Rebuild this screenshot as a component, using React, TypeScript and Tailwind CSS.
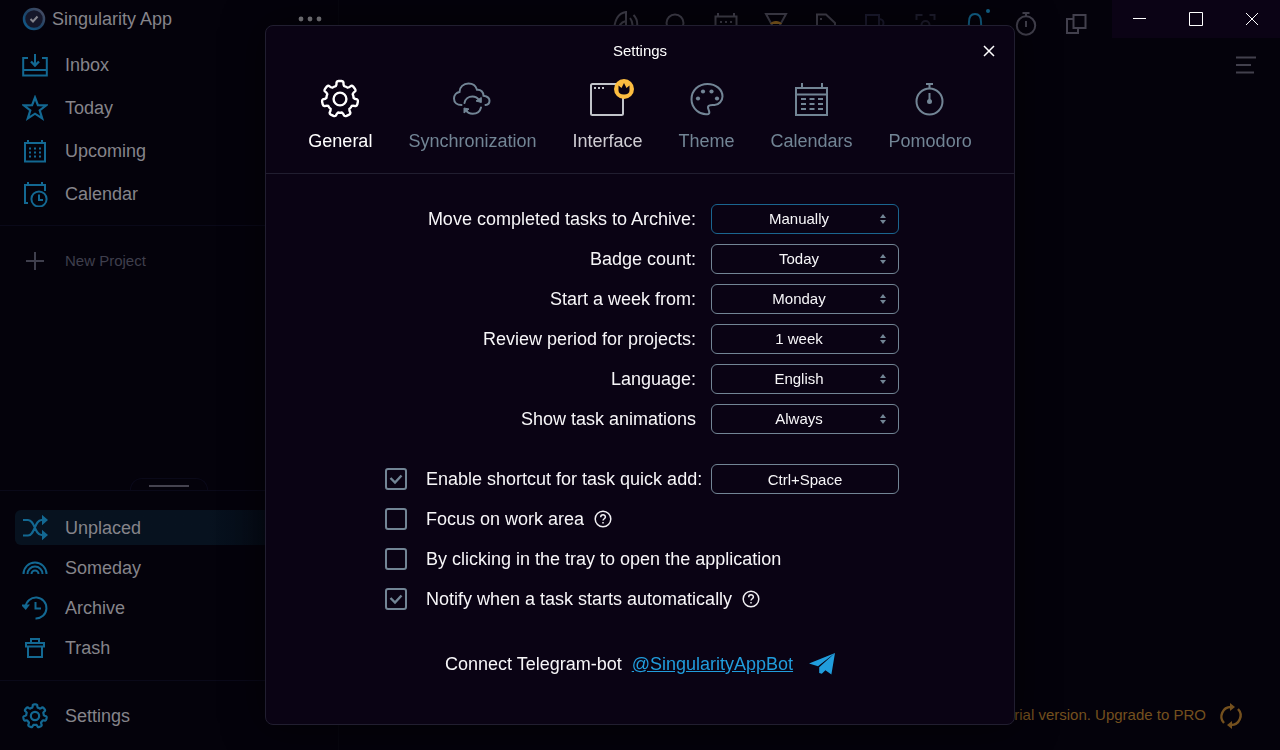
import React, { useState } from 'react';
import clsx from 'clsx';

interface IconProps {
  className?: string;
}

interface NavItem {
  label: string;
  icon: React.ReactNode;
}

// Closed outline of a seven-toothed gear around (20, 20)
function gearOutline(): string {
  const teeth = 7;
  const step = (Math.PI * 2) / teeth;
  const at = (r: number, a: number) =>
    `${(20 + r * Math.sin(a)).toFixed(2)} ${(20 - r * Math.cos(a)).toFixed(2)}`;
  let d = '';
  for (let i = 0; i < teeth; i++) {
    const a = i * step;
    d += `${i === 0 ? 'M' : 'L'}${at(13.6, a - 0.31)}`;
    d += `Q${at(14.6, a - 0.23)} ${at(17.2, a - 0.2)}`;
    d += `Q${at(18.2, a - 0.16)} ${at(18.1, a - 0.08)}`;
    d += `L${at(18.1, a + 0.08)}`;
    d += `Q${at(18.2, a + 0.16)} ${at(17.2, a + 0.2)}`;
    d += `Q${at(14.6, a + 0.23)} ${at(13.6, a + 0.31)}`;
    d += `Q${at(13.9, a + step / 2)} ${at(13.6, a + step - 0.31)}`;
  }
  return d + 'Z';
}

const GEAR = gearOutline();

function GearIcon({ className, thick }: IconProps & { thick?: boolean }) {
  return (
    <svg viewBox="0 0 40 40" className={className} fill="none" stroke="currentColor" strokeWidth={thick ? 3.4 : 2.4} strokeLinejoin="round" aria-hidden="true">
      <path d={GEAR} />
      <circle cx="20" cy="20" r="6.4" />
    </svg>
  );
}

// 26px line icon used by the sidebar and the toolbar
function Glyph({ children, className = 'size-[26px]' }: { children: React.ReactNode; className?: string }) {
  return (
    <svg viewBox="0 0 26 26" className={clsx('shrink-0', className)} fill="none" stroke="currentColor" strokeWidth="2" aria-hidden="true">
      {children}
    </svg>
  );
}

const mainNav: NavItem[] = [
  {
    label: 'Inbox',
    icon: (
      <Glyph>
        <path d="M6 6H1.2v17.5h23.6V6H20M1.2 18h23.6M13 2v10" />
        <path d="M9 9.5l4 4 4-4" strokeWidth="2.4" />
      </Glyph>
    ),
  },
  {
    label: 'Today',
    icon: (
      <Glyph>
        <path d="M13 2.5l2.9 7.6 8.3.2-6.5 5 2.5 8.1-7.2-4.7-7.2 4.7 2.5-8.1-6.5-5 8.3-.2z" strokeWidth="2.2" />
      </Glyph>
    ),
  },
  {
    label: 'Upcoming',
    icon: (
      <Glyph>
        <path d="M3 5h20v18.5H3zM6 2v3M20 2v3" />
        <path d="M7 10.5h12M7 14.5h12M7 18.5h12" strokeDasharray="2 3" />
      </Glyph>
    ),
  },
  {
    label: 'Calendar',
    icon: (
      <Glyph>
        <path d="M6 22H3V4h20v6M6 1v3M20 1v3" />
        <circle cx="17" cy="18" r="7.6" />
        <path d="M17 13.5V19h4" />
      </Glyph>
    ),
  },
];

const extraNav: NavItem[] = [
  {
    label: 'Unplaced',
    icon: (
      <Glyph>
        <path d="M1 5h5c7 0 6.5 15 13.5 15H24M1 20.5h5C13 20.5 12.5 5 19.5 5H24" />
        <path d="M21 2l3.500 3L21 8zM21 17l3.500 3-3.500 3z" fill="currentColor" />
      </Glyph>
    ),
  },
  {
    label: 'Someday',
    icon: (
      <Glyph>
        <path d="M1.5 19a11.5 11.5 0 0 1 23 0M5.5 19a7.5 7.5 0 0 1 15 0M9.5 19a3.5 3.5 0 0 1 7 0" />
      </Glyph>
    ),
  },
  {
    label: 'Archive',
    icon: (
      <Glyph>
        <path d="M3.5 12A10.5 10.5 0 1 1 13.5 23.5M13.5 7v6.500H19" />
        <path d="M1 10.5h5l-2.300 3z" fill="currentColor" />
      </Glyph>
    ),
  },
  {
    label: 'Trash',
    icon: (
      <Glyph>
        <path d="M4 8h18v3.5H4zM6 11.5V22h14V11.5M9 8V4h8v4" />
      </Glyph>
    ),
  },
];

interface Tab {
  id: string;
  label: string;
  tone: string;
  icon: React.ReactNode;
}

function TabGlyph({ children }: { children: React.ReactNode }) {
  return (
    <svg viewBox="0 0 38 38" className="size-[38px]" fill="none" stroke="currentColor" strokeWidth="2" aria-hidden="true">
      {children}
    </svg>
  );
}

const tabs: Tab[] = [
  { id: 'general', label: 'General', tone: 'text-white', icon: <GearIcon className="size-10 -m-px" /> },
  {
    id: 'sync',
    label: 'Synchronization',
    tone: 'text-[#728595]',
    icon: (
      <TabGlyph>
        <path d="M8.5 25C4 25 1 22.5 1 18.5c0-3.5 2.5-6 5.5-6.5C6.5 7 10.5 3.5 15.5 3.5c4.500 0 7.500 2.800 8.500 6.200 4-.5 6.500 2.800 6.500 6 3 .5 6 2 6 5 0 2.300-1.500 4-4 4.300" strokeLinecap="round" />
        <path d="M11.5 23c.5-4 4-6.5 8-6.5 3 0 5 1.300 6.500 3.500M28 27.500c-1 4-4.500 6.300-8.300 6.300-3 0-5.400-1.400-6.700-3.800" strokeLinecap="round" />
        <path d="M28.3 17.5v5l-5.300-1.500zM11 33v-5l5 1z" fill="currentColor" strokeWidth="1" />
      </TabGlyph>
    ),
  },
  {
    id: 'interface',
    label: 'Interface',
    tone: 'text-[#cfcdd3]',
    icon: (
      <svg viewBox="0 0 54 38" className="h-[38px] w-[54px] overflow-visible" fill="none" aria-hidden="true">
        <rect x="11" y="4" width="32" height="31" rx="1.5" stroke="#c2c4ca" strokeWidth="2" />
        <path d="M14 8h11" stroke="#c2c4ca" strokeWidth="2" strokeDasharray="2 2" />
        <circle cx="44" cy="9" r="10" fill="#fdbd40" />
        <path d="M38.5 5.5l3 2.500L44 3l2.500 5 3-2.500v5c0 2.500-2 4-5.500 4s-5.500-1.500-5.500-4z" fill="#0b0315" />
      </svg>
    ),
  },
  {
    id: 'theme',
    label: 'Theme',
    tone: 'text-[#728595]',
    icon: (
      <TabGlyph>
        <path d="M20.5 34C12 35.5 3.5 28.5 3.5 19.3 3.5 10.5 10.5 4 19.5 4 28 4 34.5 9.5 34.5 16.5c0 4-3.500 8.500-8 8.500-3 0-6-.5-6.500 2-.3 2.500 3 5.500.5 7z" />
        <g fill="currentColor" stroke="none">
          <circle cx="10" cy="18.5" r="2.1" />
          <circle cx="15" cy="11.5" r="2.1" />
          <circle cx="23.5" cy="11.5" r="2.1" />
          <circle cx="29" cy="18.5" r="2.1" />
        </g>
      </TabGlyph>
    ),
  },
  {
    id: 'calendars',
    label: 'Calendars',
    tone: 'text-[#728595]',
    icon: (
      <TabGlyph>
        <path d="M3 8h31v27H3zM3 14.5h31M9 3v5M29 3v5" />
        <path d="M8 19h23M8 24h23M8 29h23" strokeDasharray="5 3.500" />
      </TabGlyph>
    ),
  },
  {
    id: 'pomodoro',
    label: 'Pomodoro',
    tone: 'text-[#728595]',
    icon: (
      <TabGlyph>
        <circle cx="18.5" cy="21.5" r="13" />
        <path d="M15 4h7M18.5 4v4.500M18.5 13v9" />
        <circle cx="18.5" cy="21.5" r="2.500" fill="currentColor" stroke="none" />
      </TabGlyph>
    ),
  },
];

const selects = [
  { id: 'archive', label: 'Move completed tasks to Archive:', value: 'Manually' },
  { id: 'badge', label: 'Badge count:', value: 'Today' },
  { id: 'week', label: 'Start a week from:', value: 'Monday' },
  { id: 'review', label: 'Review period for projects:', value: '1 week' },
  { id: 'language', label: 'Language:', value: 'English' },
  { id: 'animations', label: 'Show task animations', value: 'Always' },
];

const toggles = [
  { id: 'shortcut', label: 'Enable shortcut for task quick add:', checked: true, shortcut: 'Ctrl+Space' },
  { id: 'focus', label: 'Focus on work area', checked: false, help: true },
  { id: 'tray', label: 'By clicking in the tray to open the application', checked: false },
  { id: 'notify', label: 'Notify when a task starts automatically', checked: true, help: true },
];

function NavButton({ item, active, className = 'h-[35px]' }: { item: NavItem; active?: boolean; className?: string }) {
  return (
    <a
      href="#"
      className={clsx(
        'ml-[15px] flex items-center gap-[17px] rounded-l-md pl-[7px] text-lg text-[#85848a]',
        className,
        active && 'bg-linear-to-r from-[#07121f] from-60% to-[#03040c]'
      )}
    >
      <span className="text-[#136892]">{item.icon}</span>
      {item.label}
    </a>
  );
}

function Sidebar() {
  return (
    <aside className="flex w-[339px] shrink-0 flex-col border-r border-[#07060f]">
      <div className="flex h-[38px] items-center pr-4 pl-[22px]">
        <svg viewBox="0 0 24 24" className="size-6" fill="none" aria-hidden="true">
          <defs>
            <linearGradient id="ring" x1="0" y1="1" x2="1" y2="0">
              <stop offset="0" stopColor="#0d5e91" />
              <stop offset=".45" stopColor="#1d4468" />
              <stop offset="1" stopColor="#4c4c60" />
            </linearGradient>
          </defs>
          <circle cx="12" cy="12" r="10" fill="#15172a" stroke="url(#ring)" strokeWidth="2.5" />
          <path d="M8.5 12l2.500 2.500 4.500-5" stroke="#85858d" strokeWidth="2" />
        </svg>
        <h1 className="ml-[6px] text-lg text-[#85848a]">Singularity App</h1>
        <button type="button" aria-label="More" className="ml-auto text-[#85848a]">
          <svg viewBox="0 0 24 6" className="h-[6px] w-6" fill="currentColor" aria-hidden="true">
            <circle cx="3" cy="3" r="2.4" />
            <circle cx="12" cy="3" r="2.4" />
            <circle cx="21" cy="3" r="2.4" />
          </svg>
        </button>
      </div>
      <nav className="border-b border-[#0a0919] pt-[5px] pb-[10px]">
        {mainNav.map((item) => (
          <NavButton key={item.label} item={item} className="h-[43px]" />
        ))}
      </nav>
      <button type="button" className="flex h-[70px] items-center gap-[17px] pl-[22px] text-[15px] text-[#3f3f4d]">
        <Glyph>
          <path d="M13 4v18M4 13h18" />
        </Glyph>
        New Project
      </button>

      <div className="mt-auto flex flex-col">
        <div className="ml-[130px] flex h-3 w-[78px] justify-center rounded-t-xl border border-b-0 border-[#0a0919] pt-[6px]">
          <span className="h-[2px] w-10 bg-[#45434f]" />
        </div>
        <nav className="flex flex-col gap-[5px] border-y border-[#0a0919] pt-[19px] pb-[15px]">
          {extraNav.map((item) => (
            <NavButton key={item.label} item={item} active={item.label === 'Unplaced'} />
          ))}
        </nav>
        <NavButton item={{ label: 'Settings', icon: <GearIcon thick className="size-[26px]" /> }} className="h-[69px]" />
      </div>
    </aside>
  );
}

const toolbar = [
  {
    label: 'Focus sounds',
    tone: 'text-[#42404d]',
    icon: <path d="M1 22C1 8 6 2 13 1v22M5 22c0-7 3-11 8-12M9 21c0-3 1-5 4-6M17 7c3 4 3 9 0 13M20.500 4c5 5 5 13 0 19" />,
  },
  {
    label: 'Search',
    tone: 'text-[#42404d]',
    icon: <><circle cx="12" cy="12" r="8.5" /><path d="M18 18l6 6" /></>,
  },
  {
    label: 'Plan',
    tone: 'text-[#42404d]',
    icon: <><path d="M2.5 5.5h21v18h-21zM5 2v4M21 2v4" /><path d="M7 11h12M7 15h12M7 19h12" strokeDasharray="2 3" /></>,
  },
  {
    label: 'Deadlines',
    tone: 'text-[#42404d]',
    icon: <><path d="M3 3h20L17 14l6 10H3l6-10z" /><path d="M7 13c2-4 10-4 12 0z" fill="#8f6320" stroke="none" /></>,
  },
  {
    label: 'Tags',
    tone: 'text-[#42404d]',
    icon: <path d="M4 3.500h9L22 12v11H4zM8 7v2" />,
  },
  {
    label: 'Breaks',
    tone: 'text-[#1c1b30]',
    icon: <path d="M3 4h13v19H3zM16 8c6 0 6 8 0 8" />,
  },
  {
    label: 'Snapshot',
    tone: 'text-[#1f1e30]',
    icon: <><path d="M3.500 9V4h6M16.500 4h5v5M21.500 18v5h-5M9 23H3.500v-5" /><circle cx="12.500" cy="14" r="4" /></>,
  },
  {
    label: 'Notifications',
    tone: 'text-[#136892]',
    icon: <path d="M3 22c2-3 3-6 3-11s2-8 6-8 6 3 6 8 1 8 3 11z" />,
    dot: true,
  },
  {
    label: 'Timer',
    tone: 'text-[#42404d]',
    icon: <><circle cx="13" cy="14.500" r="9.200" /><path d="M9.500 2h7M13 2v4M13 10v6" /></>,
  },
  {
    label: 'Windows',
    tone: 'text-[#42404d]',
    icon: <path d="M10.500 4h12v13h-12zM10 8H4v14h11v-4" />,
  },
];

function Workspace() {
  return (
    <main className="flex min-w-0 flex-1 flex-col">
      <header className="flex h-10 items-start justify-end">
        <div className="flex gap-6 pt-[11px] pr-[23px]">
          {toolbar.map((tool) => (
            <button key={tool.label} type="button" aria-label={tool.label} className={clsx('relative', tool.tone)}>
              <Glyph>{tool.icon}</Glyph>
              {tool.dot && <span className="absolute -top-[2px] -right-px size-1 rounded-full bg-[#136892]" />}
            </button>
          ))}
        </div>
        <div className="flex h-[38px] bg-[#0b0315] text-white">
          <button type="button" aria-label="Minimize" className="grid w-14 place-items-center">
            <svg viewBox="0 0 14 14" className="size-[14px]" stroke="currentColor" aria-hidden="true"><path d="M0 6.500h13" /></svg>
          </button>
          <button type="button" aria-label="Maximize" className="grid w-14 place-items-center">
            <svg viewBox="0 0 14 14" className="size-[14px]" fill="none" stroke="currentColor" aria-hidden="true"><path d="M.5.5h13v13H.5z" /></svg>
          </button>
          <button type="button" aria-label="Close" className="grid w-14 place-items-center">
            <svg viewBox="0 0 14 14" className="size-[14px]" stroke="currentColor" aria-hidden="true"><path d="M1 1l12 12M13 1L1 13" /></svg>
          </button>
        </div>
      </header>
      <div className="flex justify-end pt-[15px] pr-6">
        <button type="button" aria-label="Menu" className="text-[#42404d]">
          <svg viewBox="0 0 20 20" className="size-5" stroke="currentColor" strokeWidth="2" aria-hidden="true">
            <path d="M0 2.500h20M0 10h15M0 17.500h18" />
          </svg>
        </button>
      </div>
      <footer className="mt-auto flex h-[69px] items-center justify-end gap-3 pr-9 text-[15px] text-[#74501e]">
        <a href="#">Trial version. Upgrade to PRO</a>
        <Glyph>
          <path d="M6 20A9.500 9.500 0 0 1 13 4M20 6A9.500 9.500 0 0 1 13 22" strokeWidth="2.400" />
          <path d="M12 0v8l5-4zM14 26v-8l-5 4z" fill="currentColor" stroke="none" />
        </Glyph>
      </footer>
    </main>
  );
}

function HelpIcon() {
  return (
    <svg viewBox="0 0 18 18" className="ml-[10px] size-[18px]" fill="none" stroke="#f0eff2" strokeWidth="1.5" aria-hidden="true">
      <circle cx="9" cy="9" r="7.8" />
      <path d="M6.700 7.300C6.700 4 11.400 4.200 11.400 7c0 1.700-2.400 1.800-2.400 3.600M9 12v1.500" />
    </svg>
  );
}

function GeneralPanel() {
  const [checked, setChecked] = useState<Record<string, boolean>>(
    Object.fromEntries(toggles.map((t) => [t.id, t.checked]))
  );

  return (
    <div className="pt-[30px] pr-[115px] pb-[45px] pl-[119px] text-lg text-[#f7f6f8]">
      <div className="flex flex-col gap-[10px]">
        {selects.map((field, i) => (
          <div key={field.id} className="flex h-[30px] items-center justify-end gap-[15px]">
            <label htmlFor={field.id}>{field.label}</label>
            <div className="relative w-[188px]">
              <select
                id={field.id}
                className={clsx(
                  'block h-[30px] w-full appearance-none rounded-md border bg-transparent pr-3 text-center text-[15px] outline-none',
                  i === 0 ? 'border-[#1a6590]' : 'border-[#728595]'
                )}
              >
                <option>{field.value}</option>
              </select>
              <svg viewBox="0 0 6 10" className="pointer-events-none absolute top-[10px] right-[13px] h-[10px] w-[6px]" fill="#728595" aria-hidden="true">
                <path d="M0 4l3-4 3 4zM0 6l3 4 3-4z" />
              </svg>
            </div>
          </div>
        ))}
      </div>

      <div className="mt-[30px] flex flex-col gap-[10px]">
        {toggles.map((toggle) => (
          <div key={toggle.id} className="flex h-[30px] items-center">
            <span className="relative mr-[19px] size-[22px] shrink-0">
              <input
                id={toggle.id}
                type="checkbox"
                checked={checked[toggle.id]}
                onChange={(e) => setChecked({ ...checked, [toggle.id]: e.target.checked })}
                className="peer block size-[22px] appearance-none rounded-[3px] border-2 border-[#728595]"
              />
              <svg viewBox="0 0 22 22" className="pointer-events-none absolute inset-0 hidden size-[22px] peer-checked:block" fill="none" stroke="#728595" strokeWidth="2.4" aria-hidden="true">
                <path d="M5.500 10l4.500 4.500 6.500-7" />
              </svg>
            </span>
            <label htmlFor={toggle.id}>{toggle.label}</label>
            {toggle.help && <HelpIcon />}
            {toggle.shortcut && (
              <input
                type="text"
                aria-label="Quick add shortcut"
                defaultValue={toggle.shortcut}
                className="ml-auto h-[30px] w-[188px] rounded-md border border-[#728595] bg-transparent text-center text-[15px]"
              />
            )}
          </div>
        ))}
      </div>

      <div className="mt-[35px] flex h-[30px] items-center justify-center">
        <span>Connect Telegram-bot</span>
        <a href="#" className="ml-[10px] text-[#219ddc] underline">@SingularityAppBot</a>
        <svg viewBox="0 0 26 22" className="mr-1 ml-4 h-[22px] w-[26px]" fill="#219ddc" aria-hidden="true">
          <path d="M0 10.500L26 0 9 13.200zM10.200 14.300L26 0l-3.600 21.500-6-4.300-3.600 3.600-2.600-.8z" />
        </svg>
      </div>
    </div>
  );
}

function SettingsDialog() {
  const [active, setActive] = useState<string>('general');

  return (
    <div className="fixed inset-0 flex items-center justify-center">
      <section role="dialog" aria-labelledby="settings-title" className="w-full max-w-[750px] rounded-lg border border-[#211e30] bg-[#0a0314] shadow-[0_0_40px_#00000099]">
        <header className="border-b border-[#211e30]">
          <div className="relative flex h-[50px] items-center justify-center">
            <h2 id="settings-title" className="text-[15px] text-white">Settings</h2>
            <button type="button" aria-label="Close settings" className="absolute top-[15px] right-[15px] grid size-5 place-items-center text-white">
              <svg viewBox="0 0 12 12" className="size-3" stroke="currentColor" strokeWidth="1.5" aria-hidden="true"><path d="M1 1l10 10M11 1L1 11" /></svg>
            </button>
          </div>
          <div role="tablist" className="flex justify-center gap-9 pt-1 pb-5">
            {tabs.map((tab) => (
              <button
                key={tab.id}
                type="button"
                role="tab"
                aria-selected={active === tab.id}
                onClick={() => setActive(tab.id)}
                className={clsx('flex flex-col items-center gap-[11px] text-lg leading-6', tab.tone)}
              >
                {tab.icon}
                {tab.label}
              </button>
            ))}
          </div>
        </header>
        <GeneralPanel />
      </section>
    </div>
  );
}

export default function App() {
  return (
    <div className="flex min-h-screen bg-[#04020b] font-['Liberation_Sans',Arial,sans-serif]">
      <Sidebar />
      <Workspace />
      <SettingsDialog />
    </div>
  );
}
